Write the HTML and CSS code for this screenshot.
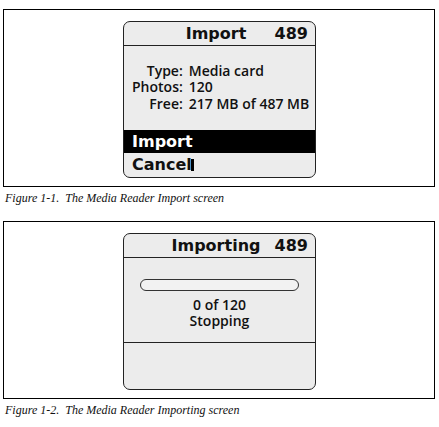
FILE: index.html
```html
<!DOCTYPE html>
<html>
<head>
<meta charset="utf-8">
<link rel="stylesheet" href="styles.css">
</head>
<body>
<div class="figure">
  <div class="frame frame-first">
    <div class="device">
      <div class="header"><span></span><span class="title">Import</span><span class="count">489</span></div>
      <div class="body body-info">
        <div class="info">
          <span class="label">Type:</span><span>Media card</span>
          <span class="label">Photos:</span><span>120</span>
          <span class="label">Free:</span><span>217 MB of 487 MB</span>
        </div>
      </div>
      <div class="menu-item selected">Import</div>
      <div class="menu-item">Cancel<span class="cursor"></span></div>
    </div>
  </div>
  <p class="caption">Figure 1-1.&nbsp; The Media Reader Import screen</p>
</div>
<div class="figure">
  <div class="frame">
    <div class="device">
      <div class="header"><span></span><span class="title">Importing</span><span class="count">489</span></div>
      <div class="body body-progress">
        <div class="progress"></div>
        <div class="status">0 of 120<br>Stopping</div>
      </div>
      <div class="footer"></div>
    </div>
  </div>
  <p class="caption">Figure 1-2.&nbsp; The Media Reader Importing screen</p>
</div>
</body>
</html>
```
FILE: styles.css
```css
html, body {
  margin: 0;
  padding: 0;
  background: #fff;
}
body {
  padding-top: 9px;
  font-family: "DejaVu Sans", sans-serif;
  color: #111;
}
.figure {
  margin-left: 3px;
  width: 432px;
}
.frame {
  box-sizing: border-box;
  height: 178px;
  border: 1px solid #000;
  display: flex;
  justify-content: center;
  align-items: flex-start;
  padding-top: 11px;
  padding-left: 1px;
}
.frame-first {
  padding-top: 11px;
}
.device {
  box-sizing: border-box;
  width: 193px;
  height: 157px;
  border: 1px solid #222;
  border-radius: 7px;
  background: #ececec;
  overflow: hidden;
  display: flex;
  flex-direction: column;
}
.header {
  box-sizing: border-box;
  height: 24px;
  border-bottom: 1px solid #222;
  display: grid;
  grid-template-columns: 1fr auto 1fr;
  align-items: center;
  font-weight: bold;
  font-size: 16px;
  line-height: 22px;
  padding: 0 7px 0 0;
}
.count {
  justify-self: end;
}
.body {
  flex: 1;
}
.body-info {
  padding: 17px 0 0 8px;
}
.info {
  display: grid;
  grid-template-columns: auto auto;
  justify-content: start;
  column-gap: 6px;
  font-family: "Open Sans", sans-serif;
  font-weight: 600;
  font-size: 14px;
  line-height: 16.3px;
}
.label {
  text-align: right;
}
.menu-item {
  box-sizing: border-box;
  height: 23px;
  padding-left: 8px;
  font-weight: bold;
  font-size: 16px;
  line-height: 23px;
}
.menu-item.selected {
  background: #000;
  color: #fff;
}
.menu-item:last-child {
  height: 24px;
}
.cursor {
  display: inline-block;
  width: 3px;
  height: 12px;
  background: #000;
  margin-left: -1px;
  vertical-align: -1px;
}
.body-progress {
  flex: none;
  height: 85px;
  border-bottom: 1px solid #222;
  box-sizing: border-box;
  padding: 21px 16px 0 16px;
}
.progress {
  box-sizing: border-box;
  height: 12px;
  border: 1px solid #333;
  border-radius: 6px;
  background: #f2f2f2;
}
.status {
  text-align: center;
  font-family: "Open Sans", sans-serif;
  font-weight: 600;
  font-size: 14px;
  line-height: 16.3px;
  margin-top: 6px;
}
.footer {
  flex: 1;
}
.caption {
  margin: 4px 0 16px 2px;
  height: 14px;
  font-family: "Liberation Serif", serif;
  font-style: italic;
  font-size: 12px;
  line-height: 14px;
  color: #111;
}
```
